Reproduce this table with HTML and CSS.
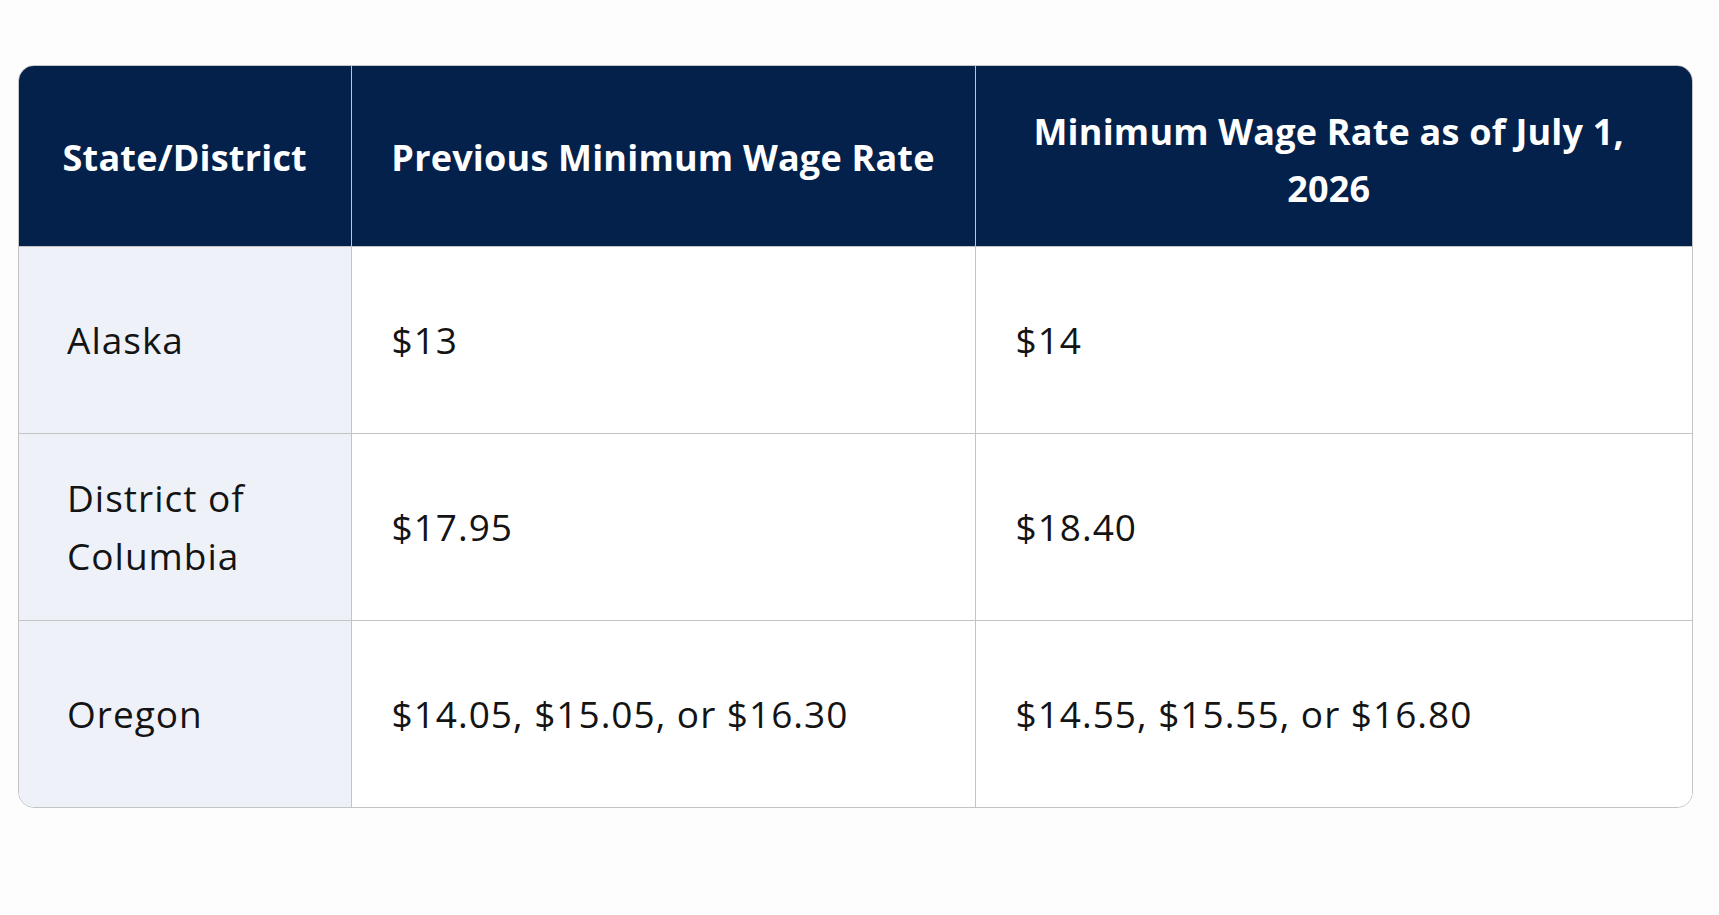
FILE: index.html
```html
<!DOCTYPE html>
<html lang="en">
<head>
<meta charset="utf-8">
<title>Minimum Wage Rates</title>
<link rel="stylesheet" href="styles.css">
</head>
<body>
<div class="page">
  <div class="table-wrap">
    <table class="wage-table">
      <colgroup>
        <col class="c1">
        <col class="c2">
        <col class="c3">
      </colgroup>
      <thead>
        <tr>
          <th class="h1">State/District</th>
          <th class="h2">Previous Minimum Wage Rate</th>
          <th class="h3">Minimum Wage Rate as of July 1,<br>2026</th>
        </tr>
      </thead>
      <tbody>
        <tr>
          <td class="state">Alaska</td>
          <td class="val">$13</td>
          <td class="val">$14</td>
        </tr>
        <tr>
          <td class="state">District of<br>Columbia</td>
          <td class="val">$17.95</td>
          <td class="val">$18.40</td>
        </tr>
        <tr>
          <td class="state">Oregon</td>
          <td class="val">$14.05, $15.05, or $16.30</td>
          <td class="val">$14.55, $15.55, or $16.80</td>
        </tr>
      </tbody>
    </table>
  </div>
</div>
</body>
</html>
```
FILE: styles.css
```css
html, body {
  margin: 0;
  padding: 0;
  background: #fdfdfd;
}
.page {
  padding: 65px 26px 0 18px;
}
.table-wrap {
  width: 1675px;
  border: 1px solid #c4c4c4;
  border-radius: 16px;
  overflow: hidden;
  box-sizing: border-box;
}
.wage-table {
  width: 100%;
  border-collapse: collapse;
  table-layout: fixed;
  font-family: "Open Sans", "Liberation Sans", sans-serif;
}
.c1 { width: 332px; }
.c2 { width: 624px; }
.c3 { width: auto; }
.wage-table th {
  background: #03214b;
  color: #ffffff;
  font-weight: 700;
  font-size: 36px;
  line-height: 57px;
  letter-spacing: 0.2px;
  text-align: center;
  height: 180px;
  padding: 3px 12px 0;
  border-left: 1px solid #c4c4c4;
  box-sizing: border-box;
}
.wage-table th.h3 {
  padding: 9px 22px 0 12px;
}
.wage-table th:first-child,
.wage-table td:first-child {
  border-left: none;
}
.wage-table td {
  font-size: 37px;
  line-height: 58px;
  letter-spacing: 1px;
  color: #141414;
  height: 187px;
  padding: 0 20px 0 40px;
  border-left: 1px solid #c4c4c4;
  border-top: 1px solid #c4c4c4;
  background: #ffffff;
  box-sizing: border-box;
}
.wage-table td.state {
  background: #eef2f8;
  padding-left: 48px;
}
```
